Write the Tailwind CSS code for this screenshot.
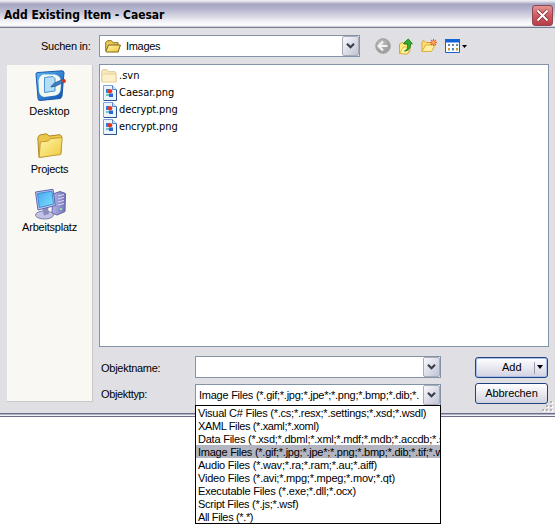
<!DOCTYPE html>
<html lang="de"><head><meta charset="utf-8"><title>Add Existing Item - Caesar</title>
<script src="https://cdn.jsdelivr.net/npm/@tailwindcss/browser@4"></script></head>
<body class="w-[555px] h-[525px] overflow-hidden bg-white text-black text-[11px] leading-[13px] font-['Liberation_Sans',sans-serif] whitespace-nowrap">
<svg class="absolute w-0 h-0">
  <defs>
    <linearGradient id="fold" x2="1" y2="1"><stop stop-color="#fff6a8"/><stop offset="1" stop-color="#f0c83c"/></linearGradient>
    <linearGradient id="blue" x2="1" y2="1"><stop stop-color="#5cb8f4"/><stop offset="1" stop-color="#0c50b0"/></linearGradient>
    <linearGradient id="scr" x2="1" y2="1"><stop stop-color="#4aa4f0"/><stop offset="1" stop-color="#7ee4ff"/></linearGradient>
    <linearGradient id="tower" x2="1"><stop stop-color="#b4b4e4"/><stop offset="1" stop-color="#7474bc"/></linearGradient>
    <radialGradient id="gray" cx=".4" cy=".35"><stop stop-color="#c2c2c2"/><stop offset="1" stop-color="#a0a0a0"/></radialGradient>
  </defs>
  <symbol id="png" viewBox="0 0 14 16"><path d="M.5.5h9l4 4v11H.5z" fill="#eaf4ff" stroke="#7ca4d8"/><path d="M13.500 5v10.500H1" fill="none" stroke="#2c5490"/><path d="M9.500.5v4h4" fill="#cfe2fa" stroke="#5c84bc"/><path d="M3 4h3v4H3z" fill="#2f7fe0"/><circle cx="7" cy="6.200" r="2.300" fill="#e23a22"/><path d="M6 8.500h4V12H6z" fill="#2a68d8"/><path d="M3 9h3v2H3z" fill="#6cc4c0"/></symbol>
  <symbol id="chev" viewBox="0 0 9 6"><path d="M1 .8 4.500 4.300 8 .8" fill="none" stroke="#383c4a" stroke-width="2.100"/></symbol>
</svg>
<main class="relative w-[555px] h-[417px] bg-[#e0dfe3] flex flex-col">
  <header class="h-7 shrink-0 flex items-center justify-between pl-1 pr-[2px] pt-[2px] border-b border-[#777b90] bg-[linear-gradient(#f4f4f8_0px,#d4d4e0_2px,#a5a5c2_4px,#b4b4cd_9px,#d5d5e2_16px,#f4f4f8_22px,#ffffff_25px,#c6c6d6_27px)]">
    <h1 class="font-['DejaVu_Sans_Condensed',sans-serif] font-bold text-[12px] leading-[14px] mt-[1px] tracking-[-0.04px]">Add Existing Item - Caesar</h1>
    <button class="w-[21px] h-[21px] mt-[1px] rounded-[3px] border border-[#8e4652] bg-linear-to-b from-[#e39494] via-[#cf5a60] to-[#b83e48] flex items-center justify-center"><svg class="w-[13px] h-[13px]" viewBox="0 0 13 13"><path d="m1.500 1.500 10 10m0-10-10 10" stroke="#7c2630" stroke-width="3.400"/><path d="m1.500 1.500 10 10m0-10-10 10" stroke="#fff" stroke-width="2.100"/></svg></button>
  </header>
  <section class="flex h-9 shrink-0 pt-[7px]">
    <span class="w-[99px] pl-[41px] pt-[5px] tracking-[-0.25px]">Suchen in:</span>
    <div class="w-[261px] h-[22px] border border-[#8494a8] bg-white flex items-center pl-[5px]">
      <svg class="w-4 h-[13px]" viewBox="0 0 16 13"><path d="M.7 10.800V2.300L2.500.7h4l1.500 2h5v3" fill="#e8c85c" stroke="#94731c"/><path d="M.8 11.500 3.600 5h11.800l-2.200 7H1.500z" fill="url(#fold)" stroke="#806418"/></svg>
      <span class="ml-[5px] tracking-[-0.3px]">Images</span>
      <span class="ml-auto w-[17px] h-[20px] border border-[#a9abb9] rounded-[2px] bg-linear-to-br from-[#f8f8fc] to-[#c2c4d6] flex items-center justify-center"><svg class="w-[9px] h-[6px]"><use href="#chev"/></svg></span>
    </div>
    <div class="flex items-center h-[22px] pl-[15px]">
      <svg class="w-4 h-4" viewBox="0 0 16 16"><circle cx="8" cy="8" r="7.400" fill="url(#gray)" stroke="#9b9b9b" stroke-width=".7"/><path d="M8 3.500 3.600 8 8 12.500M4 8h8.500" fill="none" stroke="#f4f4f4" stroke-width="2.200"/></svg>
      <svg class="w-4 h-[17px] ml-[7px]" viewBox="0 0 16 17"><path d="M1.500 15.500V6l3-1.500L6 6h5.500l.5 7-2.500 3z" fill="#ffed80" stroke="#d4aa3c"/><path d="m2 15.500 3-6.500h7.500l-3 7z" fill="#fff3a0" stroke="#d8b044" stroke-width=".8"/><path d="M6.500 13c3-1 3.500-4 3-7H8L5.300 5.500 10.300 1l4 4.800H12.500c.5 4-2 7-6 7.200z" fill="#35ad2e" stroke="#187818" stroke-width=".9"/></svg>
      <svg class="w-4 h-4 ml-[7px]" viewBox="0 0 16 16"><path d="M1 13.500V3.500l2-1 2 2h5v3" fill="#ffdf70" stroke="#d9a33a"/><path d="m1 13.500 3.500-6.500H14l-3.500 6.500z" fill="#fff0a0" stroke="#dfaa44"/><path d="M12.500 1v7M9 4.500h7M10 2l5 5m0-5-5 5" stroke="#f0602c" stroke-width="1.100"/><circle cx="12.500" cy="4.500" r="1.200" fill="#ffd070"/></svg>
      <svg class="w-[15px] h-[14px] ml-2" viewBox="0 0 15 14"><path d="M.5.5h14v13H.5z" fill="#fff" stroke="#1462d4"/><path d="M0 0h15v3.500H0z" fill="#1462d4"/><path d="M3 5h2v2H3zm4 0h2v2H7zm4 0h2v2h-2z" fill="#6a88a8"/><path d="M3 9h2v2.500H3zm8 0h2v2.500h-2z" fill="#c8983c"/><path d="M7 9h2v2.500H7z" fill="#4890a8"/></svg>
      <svg class="w-[5px] h-[3px] ml-[2px]" viewBox="0 0 5 3"><path d="M0 0h5L2.500 3z"/></svg>
    </div>
  </section>
  <section class="flex h-[338px] shrink-0">
    <nav class="w-[86px] h-[337px] mt-[1px] ml-[7px] bg-[#f9f8f3] border-r border-b border-[#c9c8ca] flex flex-col items-center shrink-0">
      <svg class="w-8 h-[31px] mt-[5px]" viewBox="0 0 32 31"><path d="M2 4Q2 2.500 4 2.500L28 .8q2 0 2 2L28 26q-.5 2-2 2.500L6 30.500q-2 0-2-2z" fill="url(#blue)" stroke="#1c58ac"/><path d="M9 4.500h12q6 1 6 8l-.5 8q-1 4-5 5L10 27q-4.500-1-5-6L4.500 11Q5 6 9 4.500z" fill="#f4f9ee"/><path d="m10.500 7.500 8.500-1 2 2v12.500l-10.500 1.500z" fill="#b5ddf8" stroke="#4692d4"/><path d="m17 16.500 3.500-3.500 8-3.500 1.500 2.500-8 4-5 1z" fill="#3a82c8" stroke="#204c84" stroke-width=".7"/><circle cx="30" cy="11" r="1.900" fill="#d8301c"/></svg>
      <span class="mt-[4px]">Desktop</span>
      <svg class="w-[26px] h-[26px] mt-[15px]" viewBox="0 0 26 26"><path d="M2 24.500.8 5 2.500 2l7-1.200L12 3l11-1.300 1.500 1.500L24 20z" fill="#ecc648" stroke="#ad862c"/><path d="M2.200 24.500 3.300 9l8-1 2-2.300L25.200 4.500 23.800 21.500z" fill="url(#fold)" stroke="#c49a35"/></svg>
      <span class="mt-[4px] tracking-[-0.25px]">Projects</span>
      <svg class="w-8 h-8 mt-[12px]" viewBox="0 0 32 32"><path d="m19 6 7-2.500 5.500 2-.5 18-8 3.500-5-2z" fill="url(#tower)" stroke="#6464a4"/><path d="m24 8 6-1.500M24 11l6-1.500M24 14l6-1.500M24 17l6-1.500" stroke="#dcdcf8"/><path d="M26 20h2v2h-2z" fill="#8ce8a0"/><ellipse cx="10.500" cy="27" rx="9" ry="4" fill="#c2c2e4" stroke="#8080b0"/><path d="m8 20 6-1 1 7-5 1.500z" fill="#8c8cc0"/><path d="M1.500 4 19 1.300 21.300 17.500 4 22z" fill="#c4c8f0" stroke="#5a68b0"/><path d="M3.500 5.500 17.800 3.200 19.500 16 5.300 19.500z" fill="url(#scr)" stroke="#287ccc" stroke-width=".8"/></svg>
      <span class="mt-px tracking-[-0.22px]">Arbeitsplatz</span>
    </nav>
    <div class="ml-[6px] flex flex-col">
      <ul class="w-[450px] h-[283px] shrink-0 border border-[#8494a8] bg-white pt-[2px] pl-[1px] font-['DejaVu_Sans_Condensed',sans-serif]">
        <li class="h-[17px] flex items-center"><svg class="w-4 h-[14px]" viewBox="0 0 16 14"><path d="M.7 12.500V2.500L2 .7h4l2 2h6l1 1.500v8.300z" fill="#f8ebb8" stroke="#ddc89a"/><path d="M1 13V6.500L2.500 5H15v8z" fill="#fcf1c8" stroke="#e4d09c"/></svg><span class="ml-[2px]">.svn</span></li>
        <li class="h-[17px] flex items-center pl-[2px]"><svg class="w-[14px] h-4"><use href="#png"/></svg><span class="ml-[2px]">Caesar.png</span></li>
        <li class="h-[17px] flex items-center pl-[2px]"><svg class="w-[14px] h-4"><use href="#png"/></svg><span class="ml-[2px] tracking-[-0.12px]">decrypt.png</span></li>
        <li class="h-[17px] flex items-center pl-[2px]"><svg class="w-[14px] h-4"><use href="#png"/></svg><span class="ml-[2px] tracking-[-0.12px]">encrypt.png</span></li>
      </ul>
      <div class="flex mt-[9px] shrink-0">
        <div class="w-[96px] pl-[2px]"><div class="pt-[6px] h-[28px] tracking-[-0.27px]">Objektname:</div><div class="pt-[4px] tracking-[-0.35px]">Objekttyp:</div></div>
        <div class="w-[246px] flex flex-col gap-[6px]">
          <div class="h-[22px] border border-[#8494a8] bg-white flex items-center justify-end"><span class="w-[17px] h-[20px] border border-[#a9abb9] rounded-[2px] bg-linear-to-br from-[#f8f8fc] to-[#c2c4d6] flex items-center justify-center"><svg class="w-[9px] h-[6px]"><use href="#chev"/></svg></span></div>
          <div class="h-[22px] border border-[#8494a8] bg-white flex items-center pl-[3px]"><span class="w-[222px] overflow-hidden tracking-[-0.25px]">Image Files (*.gif;*.jpg;*.jpe*;*.png;*.bmp;*.dib;*.</span><span class="ml-auto w-[17px] h-[20px] shrink-0 border border-[#a9abb9] rounded-[2px] bg-linear-to-br from-[#f8f8fc] to-[#c2c4d6] flex items-center justify-center"><svg class="w-[9px] h-[6px]"><use href="#chev"/></svg></span></div>
        </div>
        <div class="ml-[34px] mt-[1px] flex flex-col gap-[5px]">
          <button class="w-[73px] h-[21px] rounded-[3px] border border-[#1f4380] bg-linear-to-b from-white to-[#d2d3e2] shadow-[inset_0_0_0_1px_#a9bfea] flex items-center"><span class="ml-[26px]">Add</span><span class="ml-auto h-[12px] border-l border-[#9a9cb0] pl-[2px] pr-1 flex items-center"><svg class="w-[6px] h-[4px] -mt-[1px]" viewBox="0 0 6 4"><path d="M0 0h6L3 4z"/></svg></span></button>
          <button class="w-[73px] h-[21px] rounded-[3px] border border-[#1f4380] bg-linear-to-b from-white to-[#d2d3e2] text-center tracking-[-0.1px]">Abbrechen</button>
        </div>
      </div>
    </div>
  </section>
  <footer class="mt-auto h-[4px] border-t border-b border-[#6d6f86] bg-[#f0f0f6] shadow-[inset_0_1px_0_#b0b0c8]"></footer>
  <svg class="absolute left-[542px] top-[401px] w-3 h-3" viewBox="0 0 12 12"><path d="M9 1h2v2H9zM5 5h2v2H5zm4 0h2v2H9zM1 9h2v2H1zm4 0h2v2H5zm4 0h2v2H9z" fill="#fff"/><path d="M8 0h2v2H8zM4 4h2v2H4zm4 0h2v2H8zM0 8h2v2H0zm4 0h2v2H4zm4 0h2v2H8z" fill="#b7b3ae"/></svg>
  <ul class="absolute left-[195px] top-[405px] w-[246px] h-[119px] border border-black bg-white overflow-hidden [&>li]:h-[13px] [&>li]:pl-[2px] [&>li]:leading-[14px]">
    <li class="tracking-[-0.245px]">Visual C# Files (*.cs;*.resx;*.settings;*.xsd;*.wsdl)</li>
    <li class="tracking-[-0.37px]">XAML Files (*.xaml;*.xoml)</li>
    <li class="tracking-[-0.23px]">Data Files (*.xsd;*.dbml;*.xml;*.mdf;*.mdb;*.accdb;*.sdf)</li>
    <li class="tracking-[-0.25px] bg-[#b2b4bf]">Image Files (*.gif;*.jpg;*.jpe*;*.png;*.bmp;*.dib;*.tif;*.wmf)</li>
    <li class="tracking-[-0.23px]">Audio Files (*.wav;*.ra;*.ram;*.au;*.aiff)</li>
    <li class="tracking-[-0.22px]">Video Files (*.avi;*.mpg;*.mpeg;*.mov;*.qt)</li>
    <li class="tracking-[-0.2px]">Executable Files (*.exe;*.dll;*.ocx)</li>
    <li class="tracking-[-0.26px]">Script Files (*.js;*.wsf)</li>
    <li class="tracking-[-0.36px]">All Files (*.*)</li>
  </ul>
</main>
</body></html>
